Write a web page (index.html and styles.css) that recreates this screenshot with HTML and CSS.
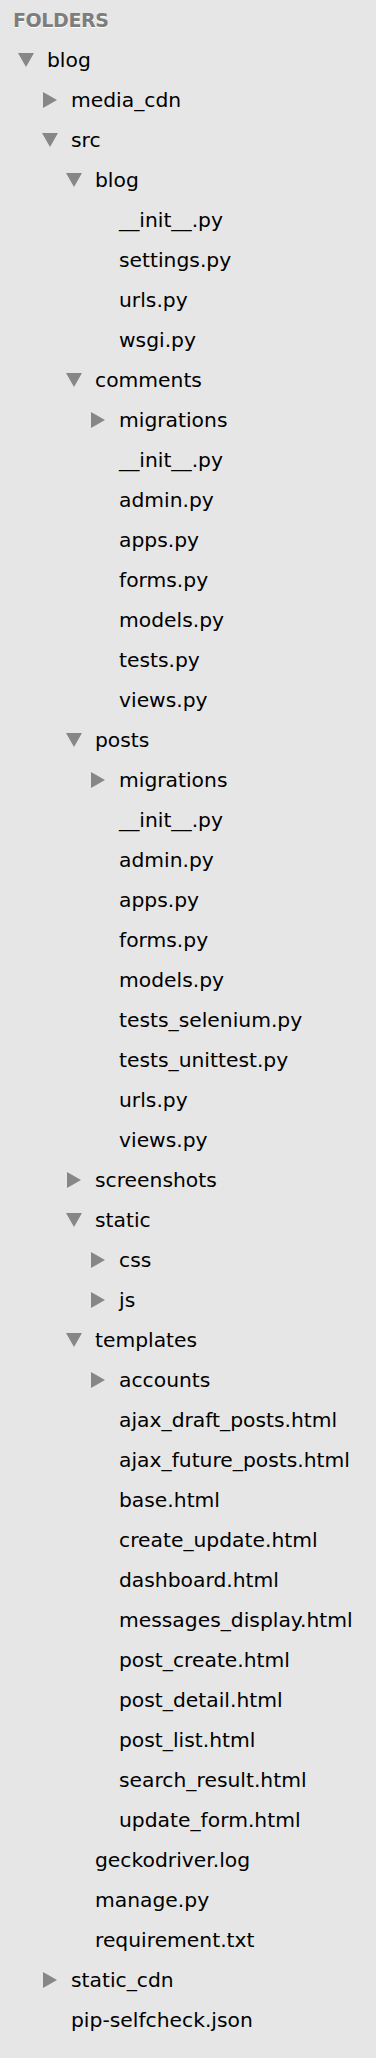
FILE: index.html
```html
<!DOCTYPE html>
<html>
<head>
<meta charset="utf-8">
<link rel="stylesheet" href="styles.css">
</head>
<body>
<div class="sidebar">
  <div class="header">FOLDERS</div>
  <ul class="tree">
    <li class="row l0"><span class="tri down"></span><span class="name">blog</span></li>
    <li class="row l1"><span class="tri right"></span><span class="name">media_cdn</span></li>
    <li class="row l1"><span class="tri down"></span><span class="name">src</span></li>
    <li class="row l2"><span class="tri down"></span><span class="name">blog</span></li>
    <li class="row l3"><span class="tri none"></span><span class="name">__init__.py</span></li>
    <li class="row l3"><span class="tri none"></span><span class="name">settings.py</span></li>
    <li class="row l3"><span class="tri none"></span><span class="name">urls.py</span></li>
    <li class="row l3"><span class="tri none"></span><span class="name">wsgi.py</span></li>
    <li class="row l2"><span class="tri down"></span><span class="name">comments</span></li>
    <li class="row l3"><span class="tri right"></span><span class="name">migrations</span></li>
    <li class="row l3"><span class="tri none"></span><span class="name">__init__.py</span></li>
    <li class="row l3"><span class="tri none"></span><span class="name">admin.py</span></li>
    <li class="row l3"><span class="tri none"></span><span class="name">apps.py</span></li>
    <li class="row l3"><span class="tri none"></span><span class="name">forms.py</span></li>
    <li class="row l3"><span class="tri none"></span><span class="name">models.py</span></li>
    <li class="row l3"><span class="tri none"></span><span class="name">tests.py</span></li>
    <li class="row l3"><span class="tri none"></span><span class="name">views.py</span></li>
    <li class="row l2"><span class="tri down"></span><span class="name">posts</span></li>
    <li class="row l3"><span class="tri right"></span><span class="name">migrations</span></li>
    <li class="row l3"><span class="tri none"></span><span class="name">__init__.py</span></li>
    <li class="row l3"><span class="tri none"></span><span class="name">admin.py</span></li>
    <li class="row l3"><span class="tri none"></span><span class="name">apps.py</span></li>
    <li class="row l3"><span class="tri none"></span><span class="name">forms.py</span></li>
    <li class="row l3"><span class="tri none"></span><span class="name">models.py</span></li>
    <li class="row l3"><span class="tri none"></span><span class="name">tests_selenium.py</span></li>
    <li class="row l3"><span class="tri none"></span><span class="name">tests_unittest.py</span></li>
    <li class="row l3"><span class="tri none"></span><span class="name">urls.py</span></li>
    <li class="row l3"><span class="tri none"></span><span class="name">views.py</span></li>
    <li class="row l2"><span class="tri right"></span><span class="name">screenshots</span></li>
    <li class="row l2"><span class="tri down"></span><span class="name">static</span></li>
    <li class="row l3"><span class="tri right"></span><span class="name">css</span></li>
    <li class="row l3"><span class="tri right"></span><span class="name">js</span></li>
    <li class="row l2"><span class="tri down"></span><span class="name">templates</span></li>
    <li class="row l3"><span class="tri right"></span><span class="name">accounts</span></li>
    <li class="row l3"><span class="tri none"></span><span class="name">ajax_draft_posts.html</span></li>
    <li class="row l3"><span class="tri none"></span><span class="name">ajax_future_posts.html</span></li>
    <li class="row l3"><span class="tri none"></span><span class="name">base.html</span></li>
    <li class="row l3"><span class="tri none"></span><span class="name">create_update.html</span></li>
    <li class="row l3"><span class="tri none"></span><span class="name">dashboard.html</span></li>
    <li class="row l3"><span class="tri none"></span><span class="name">messages_display.html</span></li>
    <li class="row l3"><span class="tri none"></span><span class="name">post_create.html</span></li>
    <li class="row l3"><span class="tri none"></span><span class="name">post_detail.html</span></li>
    <li class="row l3"><span class="tri none"></span><span class="name">post_list.html</span></li>
    <li class="row l3"><span class="tri none"></span><span class="name">search_result.html</span></li>
    <li class="row l3"><span class="tri none"></span><span class="name">update_form.html</span></li>
    <li class="row l2"><span class="tri none"></span><span class="name">geckodriver.log</span></li>
    <li class="row l2"><span class="tri none"></span><span class="name">manage.py</span></li>
    <li class="row l2"><span class="tri none"></span><span class="name">requirement.txt</span></li>
    <li class="row l1"><span class="tri right"></span><span class="name">static_cdn</span></li>
    <li class="row l1"><span class="tri none"></span><span class="name">pip-selfcheck.json</span></li>
  </ul>
</div>
</body>
</html>
```

FILE: styles.css
```css
html, body {
  margin: 0;
  padding: 0;
  background: #e6e6e6;
}
.sidebar {
  width: 376px;
  min-height: 2058px;
  background: #e6e6e6;
  font-family: "DejaVu Sans", "Liberation Sans", sans-serif;
  color: #000;
}
.header {
  height: 40px;
  display: flex;
  align-items: center;
  padding-left: 13px;
  font-size: 19px;
  font-weight: bold;
  color: #7d7d7d;
  text-shadow: 0 1px 0 #fff;
  letter-spacing: -0.4px;
}
.tree {
  list-style: none;
  margin: 0;
  padding: 0;
}
.row {
  height: 40px;
  display: flex;
  align-items: center;
  gap: 13px;
  font-size: 20.3px;
  white-space: nowrap;
}
.l0 { padding-left: 18px; }
.l1 { padding-left: 42px; }
.l2 { padding-left: 66px; }
.l3 { padding-left: 90px; }
.tri {
  width: 16px;
  height: 16px;
  flex: none;
  position: relative;
}
.tri.down::before {
  content: "";
  position: absolute;
  left: 0;
  top: 1px;
  border-left: 8px solid transparent;
  border-right: 8px solid transparent;
  border-top: 14px solid #878787;
}
.tri.right::before {
  content: "";
  position: absolute;
  left: 1px;
  top: 0;
  border-top: 8px solid transparent;
  border-bottom: 8px solid transparent;
  border-left: 14px solid #878787;
}
.name {
  line-height: 1;
}
```
